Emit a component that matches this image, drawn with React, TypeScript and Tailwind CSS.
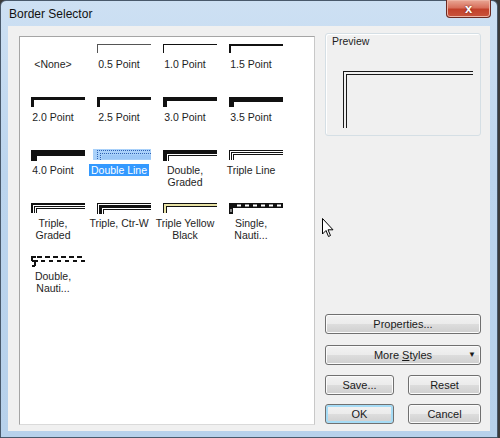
import type { ReactNode } from 'react'

type Band = { o: number; w: number; c?: string }

const Corner = ({ bands, h = 10, w = 54 }: { bands: Band[]; h?: number; w?: number }) => (
	<svg width={w} height={12} className="block">
		{bands.map((b, i) => (
			<g key={i} fill={b.c ?? '#111'}>
				<rect x={b.o} y={b.o} width={w - b.o} height={b.w} />
				<rect x={b.o} y={b.o} width={b.w} height={h - b.o} />
			</g>
		))}
	</svg>
)

const SingleNauti = () => (
	<svg width={54} height={12} className="block">
		<rect x={0} y={0} width={54} height={5} fill="#111" />
		{[8, 16, 24, 32, 40, 48].map(x => <rect key={x} x={x} y={1.5} width={4} height={2} fill="#fff" />)}
		<rect x={0} y={0} width={4} height={11} fill="#111" />
		<rect x={1.5} y={6} width={1} height={3} fill="#fff" />
	</svg>
)

const DoubleNauti = () => (
	<svg width={54} height={12} className="block">
		{[6, 14, 22, 30, 38, 46].map(x => <rect key={x} x={x} y={0} width={5} height={2} fill="#111" />)}
		{[10, 18, 26, 34, 42, 50].map(x => <rect key={x} x={x} y={4} width={4} height={2} fill="#111" />)}
		<rect x={0} y={0} width={5} height={2} fill="#111" />
		<rect x={0} y={2} width={2} height={3} fill="#111" />
		<rect x={1} y={4} width={6} height={2} fill="#111" />
		<rect x={3} y={6} width={2} height={4} fill="#111" />
		<rect x={1} y={9} width={3} height={2} fill="#111" />
	</svg>
)

const SelectedDouble = () => (
	<div className="bg-[#a9d1fa] w-[58px] h-[11px] -ml-[4px] -mt-[1px] pl-[4px] pt-[1px]">
		<svg width={54} height={10} className="block">
			<g stroke="#2f62b3" strokeWidth={1} strokeDasharray="1 1">
				<line x1={0} y1={0.5} x2={54} y2={0.5} />
				<line x1={0.5} y1={0} x2={0.5} y2={10} />
				<line x1={3} y1={3.5} x2={54} y2={3.5} />
				<line x1={3.5} y1={3} x2={3.5} y2={10} />
			</g>
			<rect x={5} y={5} width={49} height={4} fill="#9cc8f7" />
		</svg>
	</div>
)

type Item = { label: string; icon?: ReactNode; selected?: boolean }

const items: Item[] = [
	{ label: '<None>' },
	{ label: '0.5 Point', icon: <Corner bands={[{ o: 0, w: 1, c: '#555' }]} h={9} /> },
	{ label: '1.0 Point', icon: <Corner bands={[{ o: 0, w: 1 }]} h={9} /> },
	{ label: '1.5 Point', icon: <Corner bands={[{ o: 0, w: 2 }]} h={9} /> },
	{ label: '2.0 Point', icon: <Corner bands={[{ o: 0, w: 3 }]} /> },
	{ label: '2.5 Point', icon: <Corner bands={[{ o: 0, w: 3 }]} /> },
	{ label: '3.0 Point', icon: <Corner bands={[{ o: 0, w: 4 }]} /> },
	{ label: '3.5 Point', icon: <Corner bands={[{ o: 0, w: 5 }]} /> },
	{ label: '4.0 Point', icon: <Corner bands={[{ o: 0, w: 6 }]} h={11} /> },
	{ label: 'Double Line', icon: <SelectedDouble />, selected: true },
	{ label: 'Double,\nGraded', icon: <Corner bands={[{ o: 0, w: 4 }, { o: 5, w: 1 }]} h={11} /> },
	{ label: 'Triple Line', icon: <Corner bands={[{ o: 0, w: 1 }, { o: 2, w: 1 }, { o: 4, w: 1 }]} /> },
	{ label: 'Triple,\nGraded', icon: <Corner bands={[{ o: 0, w: 2 }, { o: 3, w: 1 }, { o: 5, w: 1 }]} /> },
	{ label: 'Triple, Ctr-W', icon: <Corner bands={[{ o: 0, w: 1 }, { o: 2, w: 3 }, { o: 6, w: 1 }]} h={11} /> },
	{ label: 'Triple Yellow\nBlack', icon: <Corner bands={[{ o: 0, w: 1 }, { o: 1, w: 2, c: '#e9e3a6' }, { o: 3, w: 1 }]} /> },
	{ label: 'Single,\nNauti...', icon: <SingleNauti /> },
	{ label: 'Double,\nNauti...', icon: <DoubleNauti /> },
]

const btn = "h-[20px] rounded-[3px] border border-[#707070] bg-[linear-gradient(180deg,#f2f2f2_0%,#ebebeb_50%,#dddddd_50%,#cfcfcf_100%)] shadow-[inset_0_0_0_1px_#fbfbfb] text-[11px] text-[#1a1a1a] flex items-center justify-center"

export default function App() {
	return <div className="w-[500px] h-[438px] bg-[#3b3b3b] overflow-hidden font-['Liberation_Sans',Arial,sans-serif]">
		<div className="w-[498px] h-[438px] rounded-t-[6px] border border-[#49596b] bg-[linear-gradient(180deg,#cde0f3_0%,#bcd5ee_40%,#b7d1eb_100%)] flex flex-col">
			<div className="h-[25px] flex items-start justify-between pl-[8px] pr-[6px]">
				<span className="self-center text-[12px] text-[#111] mt-[1px]">Border Selector</span>
				<div className="-mt-px w-[45px] h-[18px] rounded-b-[4px] border border-[#6b2a22] border-t-0 bg-[linear-gradient(180deg,#e9a795_0%,#d8705c_45%,#c2412b_55%,#c9543c_100%)] shadow-[inset_0_0_0_1px_#eeb3a3] flex items-center justify-center">
					<span className="text-white text-[13px] font-bold leading-none [text-shadow:0_0_2px_#5a1a10]">x</span>
				</div>
			</div>
			<div className="ml-[7px] w-[482px] h-[405px] bg-[#f0f0f0] flex items-start pl-[11px] pt-[7px]">
				<div className="mt-[3px] w-[296px] h-[389px] bg-white border border-[#a5a5a5] border-r-[#c8c8c8] border-b-[#dadada] grid grid-cols-[repeat(4,66px)] auto-rows-[53px] content-start pt-[7px]">
					{items.map((it, i) => (
						<div key={i} className="flex flex-col">
							<div className="h-[14px] pl-[11px]">{it.icon}</div>
							<div className="flex justify-center">
								<span className={`text-[10.5px] leading-[12px] text-center whitespace-pre-line px-[2px] ${it.selected ? 'bg-[#3399ff] text-white' : 'text-[#1e1e1e]'}`}>
									{it.label}
								</span>
							</div>
						</div>
					))}
				</div>
				<div className="ml-[10px] w-[156px] h-[391px] flex flex-col">
					<div className="h-[103px] border border-[#d5dfe5] rounded-[3px] shadow-[inset_1px_1px_0_#fff] pl-[6px] pt-[1px]">
						<div className="text-[10.5px] leading-[12px] text-[#1e1e1e]">Preview</div>
						<svg width={131} height={57} className="block ml-[11px] mt-[24px]">
							<g fill="#1a1a1a">
								<rect x={0} y={0} width={130} height={1} />
								<rect x={0} y={0} width={1} height={57} />
								<rect x={3} y={3} width={127} height={1} />
								<rect x={3} y={3} width={1} height={54} />
							</g>
						</svg>
					</div>
					<div className="flex-1" />
					<div className={btn}>Properties...</div>
					<div className={`${btn} mt-[11px] relative`}>
						<span>More <span className="underline">S</span>tyles</span>
						<span className="absolute right-[4px] top-[3px] text-[8px]">▼</span>
					</div>
					<div className="mt-[10px] flex justify-between">
						<div className={`${btn} w-[69px]`}>Save...</div>
						<div className={`${btn} w-[73px]`}>Reset</div>
					</div>
					<div className="mt-[9px] flex justify-between">
						<div className={`${btn} w-[69px] border-[#3c7fb1] shadow-[inset_0_0_0_2px_#a6dcf6]`}>OK</div>
						<div className={`${btn} w-[73px]`}>Cancel</div>
					</div>
				</div>
			</div>
		</div>
		<svg width={13} height={20} className="absolute left-[322px] top-[218px]" viewBox="0 0 13 20">
			<path d="M0.5 0.5 L0.5 16 L4 12.5 L6.5 18.5 L8.5 17.5 L6 11.8 L11 11.8 Z" fill="#fff" stroke="#000" strokeWidth={1} />
		</svg>
	</div>
}
